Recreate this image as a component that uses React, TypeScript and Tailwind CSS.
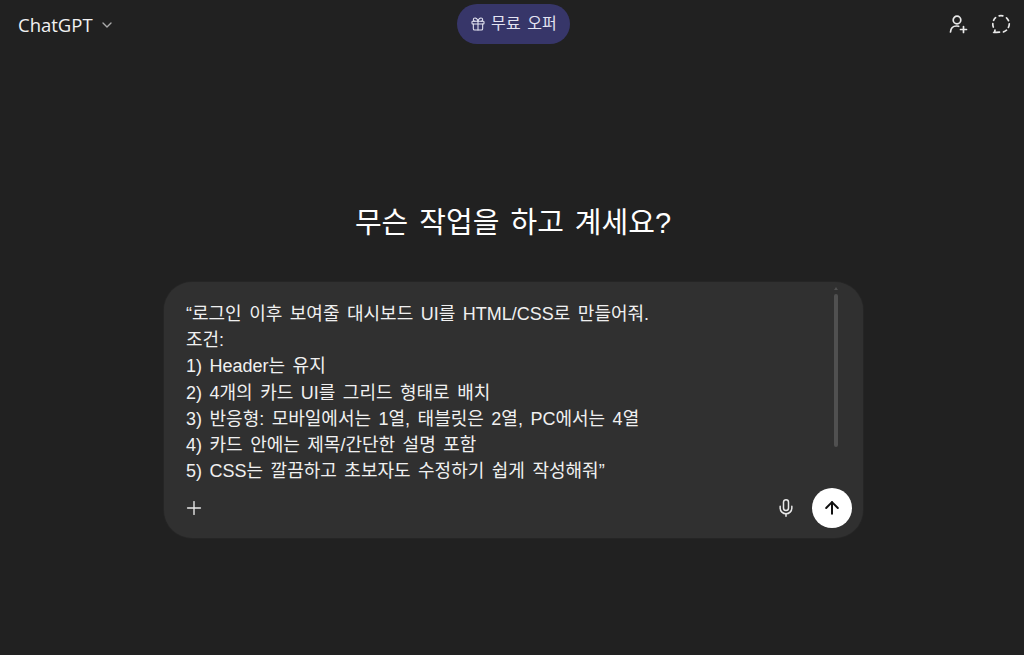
import { ChevronDown, Gift, Mic, Plus, ArrowUp } from 'lucide-react';

const PROMPT_LINES = [
  '“로그인 이후 보여줄 대시보드 UI를 HTML/CSS로 만들어줘.',
  '조건:',
  '1) Header는 유지',
  '2) 4개의 카드 UI를 그리드 형태로 배치',
  '3) 반응형: 모바일에서는 1열, 태블릿은 2열, PC에서는 4열',
  '4) 카드 안에는 제목/간단한 설명 포함',
  '5) CSS는 깔끔하고 초보자도 수정하기 쉽게 작성해줘”',
];

function AddPersonIcon() {
  return (
    <svg width="20" height="20" viewBox="0 0 20 20" fill="none" stroke="currentColor" strokeWidth="1.7" strokeLinecap="round">
      <circle cx="9" cy="6" r="3.8" />
      <path d="M2.5 18c.3-4 2.6-6 6-6 .8 0 1.500.1 2.200.3" />
      <path d="M15.500 12.500v6M12.500 15.500h6" />
    </svg>
  );
}

function TemporaryChatIcon() {
  return (
    <svg width="20" height="20" viewBox="0 0 20 20" fill="none" stroke="currentColor" strokeWidth="1.7" strokeLinecap="round">
      <path d="M8.200 1.900a8.300 8.300 0 0 1 3.600 0" />
      <path d="M15.500 3.900a8.300 8.300 0 0 1 2 2.800" />
      <path d="M18.300 9.800a8.300 8.300 0 0 1-.9 3.600" />
      <path d="M15.500 16.200a8.300 8.300 0 0 1-3 1.700" />
      <path d="M8.500 18.200c-1 .1-3 .2-5.300.1 .6-.8 .8-1.500 .8-2.300" />
      <path d="M2.300 13a8.300 8.300 0 0 1-.5-3.300" />
      <path d="M2.600 6.300a8.300 8.300 0 0 1 2-2.600" />
    </svg>
  );
}

export default function App() {
  return (
    <div className="flex h-[655px] w-[1024px] flex-col overflow-hidden bg-[#212121] font-['Liberation_Sans','Noto_Sans_CJK_KR',sans-serif] text-white">
      <header className="grid h-[48px] shrink-0 grid-cols-[1fr_113px_1fr] pr-[15px] pl-[18px]">
        <div className="flex items-center gap-[6px] pt-[2px]">
          <span className="font-['Open_Sans',sans-serif] text-[18.5px] leading-none text-[#f2f2f2]">ChatGPT</span>
          <ChevronDown size={16} className="text-[#aaaaaa]" />
        </div>
        <div className="pt-[4px]">
          <button className="flex h-[40px] w-full items-center justify-center gap-[5px] rounded-full bg-[#373669] text-[16px] tracking-[0.1px] [word-spacing:2px] text-[#e4e4f2]">
            <Gift size={16} strokeWidth={1.6} />
            무료 오퍼
          </button>
        </div>
        <div className="-mr-[2px] flex items-center justify-end gap-[23px] text-[#e8e8e8]">
          <AddPersonIcon />
          <TemporaryChatIcon />
        </div>
      </header>

      <main className="flex flex-1 flex-col items-center pt-[154px]">
        <h1 className="ml-[2px] text-[29px] leading-[42px] font-normal [word-spacing:3px] text-white">무슨 작업을 하고 계세요?</h1>

        <div className="relative mt-[38px] ml-[3px] w-[699px] rounded-[28px] bg-[#303030] pt-[19px] pr-[11px] pb-[10px] pl-[22px] shadow-[0_0_2px_rgba(255,255,255,0.08)]">
          <div className="text-[18px] leading-[26.2px] [word-spacing:2.5px] text-[#f0f0f0]">
            {PROMPT_LINES.map((line) => (
              <div key={line}>{line}</div>
            ))}
          </div>

          {/* scrollbar of the textarea */}
          <div className="absolute top-[12px] right-[25px] h-[153px] w-[4px] rounded-full bg-[#505050]" />
          <div className="absolute top-[5px] right-[25px] h-0 w-0 border-x-[2px] border-b-[3px] border-x-transparent border-b-[#505050]" />

          <div className="mt-[4px] flex items-center justify-between">
            <Plus size={22} strokeWidth={1.5} className="-ml-[3px] text-[#e8e8e8]" />
            <div className="flex items-center gap-[16px]">
              <Mic size={20} strokeWidth={1.8} className="text-[#e8e8e8]" />
              <button className="flex h-[40px] w-[40px] items-center justify-center rounded-full bg-white text-[#111111]">
                <ArrowUp size={20} strokeWidth={2.4} />
              </button>
            </div>
          </div>
        </div>
      </main>
    </div>
  );
}
